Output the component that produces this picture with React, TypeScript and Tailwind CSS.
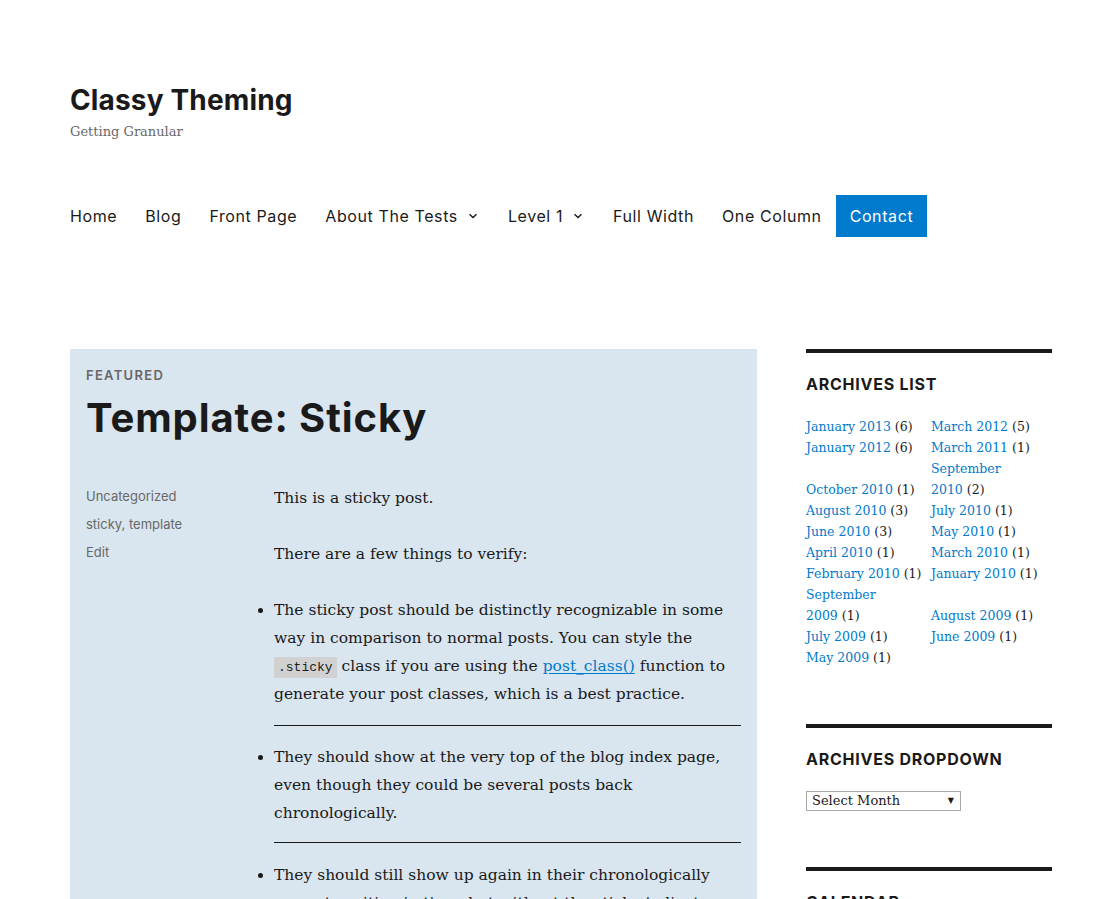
import React from "react";

const sans = "font-['Inter','Noto_Sans',sans-serif]";
const serif = "font-['DejaVu_Serif','Liberation_Serif',serif]";

function Chevron() {
  return (
    <svg
      className="absolute right-[16px] top-1/2 -translate-y-1/2"
      width="10"
      height="6"
      viewBox="0 0 10 6"
      fill="none"
    >
      <path d="M1.5 1.2 L5 4.6 L8.5 1.2" stroke="#1a1a1a" strokeWidth="1.4" />
    </svg>
  );
}

const navItems = [
  { name: "Home" },
  { name: "Blog" },
  { name: "Front Page" },
  { name: "About The Tests", children: true },
  { name: "Level 1", children: true },
  { name: "Full Width" },
  { name: "One Column" },
  { name: "Contact", current: true },
];

const archives = [
  "January 2013|6",
  "March 2012|5",
  "January 2012|6",
  "March 2011|1",
  "October 2010|1",
  "September 2010|2",
  "August 2010|3",
  "July 2010|1",
  "June 2010|3",
  "May 2010|1",
  "April 2010|1",
  "March 2010|1",
  "February 2010|1",
  "January 2010|1",
  "September 2009|1",
  "August 2009|1",
  "July 2009|1",
  "June 2009|1",
  "May 2009|1",
];

function Widget(props: { title: string; children?: React.ReactNode }) {
  return (
    <section className="border-t-4 border-[#1a1a1a] pt-[21px] mb-[56px]">
      <h2
        className={`${sans} text-[16px] leading-[21px] font-bold uppercase tracking-[0.75px] text-[#1a1a1a] mb-[21px]`}
      >
        {props.title}
      </h2>
      {props.children}
    </section>
  );
}

export default function App() {
  return (
    <div className="min-h-screen bg-white text-[#1a1a1a] overflow-hidden">
      <header className="pl-[70px] pt-[83px]">
        <h1 className={`${sans} text-[28px] leading-[35px] font-bold tracking-[0.15px] text-[#1a1a1a]`}>
          Classy Theming
        </h1>
        <p className={`${serif} mt-[3px] text-[13px] leading-[21px] text-[#686868]`}>
          Getting Granular
        </p>
        <nav className="mt-[53px]">
          <ul className="flex -ml-[14px]">
            {navItems.map((item) => (
              <li key={item.name} className="relative">
                <a
                  className={
                    (item.current
                      ? "bg-[#007acc] text-white "
                      : "text-[#1a1a1a] ") +
                    (item.children ? "pr-[36px] " : "pr-[14px] ") +
                    `${sans} block pl-[14px] py-[10.5px] text-[16px] tracking-[0.6px] leading-[21px]`
                  }
                >
                  {item.name}
                </a>
                {item.children && <Chevron />}
              </li>
            ))}
          </ul>
        </nav>
      </header>

      <div className="pl-[70px] mt-[112px] flex gap-[49px]">
        <main className="w-[687px] shrink-0">
          <article className="bg-[#d9e5ef] px-[16px] pt-[16px] pb-[40px]">
            <div
              className={`${sans} text-[13px] leading-[20px] font-semibold uppercase tracking-[1.3px] text-[#686868]`}
            >
              Featured
            </div>
            <h2
              className={`${sans} mt-[9px] text-[40px] leading-[48px] font-bold tracking-[0.9px] text-[#1a1a1a]`}
            >
              Template: Sticky
            </h2>
            <div className="mt-[40px] flex">
              <div
                className={`${sans} w-[188px] shrink-0 text-[13px] leading-[28px] text-[#686868]`}
              >
                <div>Uncategorized</div>
                <div>sticky, template</div>
                <div>Edit</div>
              </div>
              <div
                className={`${serif} w-[467px] pt-[2px] text-[15.5px] leading-[28px] text-[#1a1a1a]`}
              >
                <p className="mb-[28px]">This is a sticky post.</p>
                <p className="mb-[28px]">There are a few things to verify:</p>
                <ul className="list-disc">
                  <li>
                    The sticky post should be distinctly recognizable in some way in
                    comparison to normal posts. You can style the{" "}
                    <code className="inline-block align-middle bg-[#d1d1d1] px-[4px] leading-[21px] font-['Liberation_Mono',monospace] text-[13px]">
                      .sticky
                    </code>{" "}
                    class if you are using the{" "}
                    <a className="text-[#007acc] underline underline-offset-2">post_class()</a>{" "}
                    function to generate your post classes, which is a best practice.
                    <hr className="mt-[17px] mb-[17px] border-t border-[#1a1a1a]" />
                  </li>
                  <li>
                    They should show at the very top of the blog index page, even though
                    they could be several posts back chronologically.
                    <hr className="mt-[15px] mb-[18px] border-t border-[#1a1a1a]" />
                  </li>
                  <li>
                    They should still show up again in their chronologically correct
                    position in time, but without the sticky indicator.
                  </li>
                </ul>
              </div>
            </div>
          </article>
        </main>

        <aside className="w-[246px] shrink-0">
          <Widget title="Archives List">
            <ul
              className={`${serif} grid grid-cols-[125px_1fr] items-end text-[12.5px] leading-[21px]`}
            >
              {archives.map((a) => {
                const [label, count] = a.split("|");
                return (
                  <li key={label}>
                    <a className="text-[#007acc]">{label}</a>
                    {"\u00A0"}({count})
                  </li>
                );
              })}
            </ul>
          </Widget>
          <Widget title="Archives Dropdown">
            <div
              className={`${serif} w-[155px] h-[20px] border border-[#a9a9a9] bg-white flex items-center justify-between pl-[5px] pr-[6px] text-[13px] text-[#1a1a1a]`}
            >
              <span>Select Month</span>
              <span className="text-[8px]">▼</span>
            </div>
          </Widget>
          <Widget title="Calendar" />
        </aside>
      </div>
    </div>
  );
}
